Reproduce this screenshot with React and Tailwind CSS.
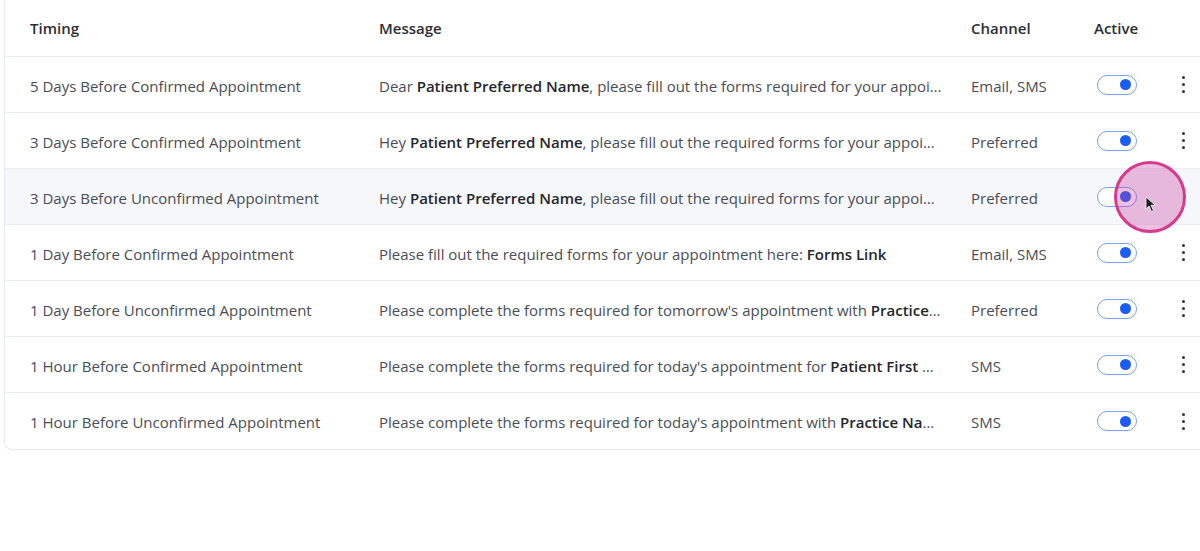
import React from "react";

const rows = [
  {
    timing: "5 Days Before Confirmed Appointment",
    message: [["Dear "], ["Patient Preferred Name", true], [", please fill out the forms required for your appointment here: "], ["Forms Link", true]],
    channel: "Email, SMS",
  },
  {
    timing: "3 Days Before Confirmed Appointment",
    message: [["Hey "], ["Patient Preferred Name", true], [", please fill out the required forms for your appointment here: "], ["Forms Link", true]],
    channel: "Preferred",
  },
  {
    timing: "3 Days Before Unconfirmed Appointment",
    message: [["Hey "], ["Patient Preferred Name", true], [", please fill out the required forms for your appointment here: "], ["Forms Link", true]],
    channel: "Preferred",
    hover: true,
  },
  {
    timing: "1 Day Before Confirmed Appointment",
    message: [["Please fill out the required forms for your appointment here: "], ["Forms Link", true]],
    channel: "Email, SMS",
  },
  {
    timing: "1 Day Before Unconfirmed Appointment",
    message: [["Please complete the forms required for tomorrow's appointment with "], ["Practice Name", true], [": "], ["Forms Link", true]],
    channel: "Preferred",
  },
  {
    timing: "1 Hour Before Confirmed Appointment",
    message: [["Please complete the forms required for today's appointment for "], ["Patient First Name", true], [": "], ["Forms Link", true]],
    channel: "SMS",
  },
  {
    timing: "1 Hour Before Unconfirmed Appointment",
    message: [["Please complete the forms required for today's appointment with "], ["Practice Name", true], [": "], ["Forms Link", true]],
    channel: "SMS",
  },
];

const cols = "grid grid-cols-[349px_592px_123px_82px_1fr]";

function Toggle() {
  return (
    <div className="flex items-center justify-end w-10 h-5 rounded-full border-[1.5px] border-[#7aa0f7] bg-white pr-[5px]">
      <div className="w-[11px] h-[11px] rounded-full bg-[#1d5cf2]" />
    </div>
  );
}

function Kebab() {
  return (
    <div className="flex flex-col items-center gap-[4px]">
      <span className="w-[3px] h-[3px] rounded-full bg-[#333]" />
      <span className="w-[3px] h-[3px] rounded-full bg-[#333]" />
      <span className="w-[3px] h-[3px] rounded-full bg-[#333]" />
    </div>
  );
}

function Cursor() {
  return (
    <svg width="12" height="17" viewBox="0 0 12 17" className="absolute left-[1145px] top-[196px]">
      <path d="M1 1 L1 13 L4 10 L6.5 15.5 L8.5 14.6 L6 9.2 L10.2 9.2 Z" fill="#1a1a1a" stroke="#fff" strokeWidth="0.8" strokeLinejoin="round" />
    </svg>
  );
}

export default function App() {
  return (
    <div
      className="relative w-[1200px] h-[551px] overflow-hidden bg-white text-[15px] text-[#4a4d55]"
      style={{ fontFamily: '"Open Sans", "Noto Sans", sans-serif' }}
    >
      <div className="ml-1 w-[1220px] border-l border-b border-[#e6eaf0] rounded-bl-lg">
        <div className={`${cols} h-[57px] items-center border-b border-[#e9edf3] font-semibold text-[#2b2e35]`}>
          <div className="pl-[25px]">Timing</div>
          <div className="pl-[25px]">Message</div>
          <div className="pl-[25px]">Channel</div>
          <div className="pl-[25px]">Active</div>
          <div />
        </div>
        {rows.map((r, i) => (
          <div
            key={i}
            className={`${cols} h-[56px] items-center pt-[3px] ${i < rows.length - 1 ? "border-b border-[#e9edf3]" : ""} ${r.hover ? "bg-[#f5f7fa]" : ""}`}
          >
            <div className="pl-[25px] whitespace-nowrap">{r.timing}</div>
            <div className="pl-[25px] pr-[4px] truncate">
              {r.message.map(([t, b], j) =>
                b ? (
                  <span key={j} className="font-semibold text-[#23262d]">{t}</span>
                ) : (
                  <span key={j}>{t}</span>
                )
              )}
            </div>
            <div className="pl-[25px] whitespace-nowrap">{r.channel}</div>
            <div className="pl-[28px] -mt-[3px]">
              <Toggle />
            </div>
            <div className="flex pl-[31px] -mt-[3px]">
              {!r.hover && <Kebab />}
            </div>
          </div>
        ))}
      </div>
      <div className="absolute left-[1114px] top-[161px] w-[72px] h-[72px] rounded-full border-[3px] border-[#d43a8d] bg-[rgba(200,60,160,0.33)]" />
      <Cursor />
    </div>
  );
}
